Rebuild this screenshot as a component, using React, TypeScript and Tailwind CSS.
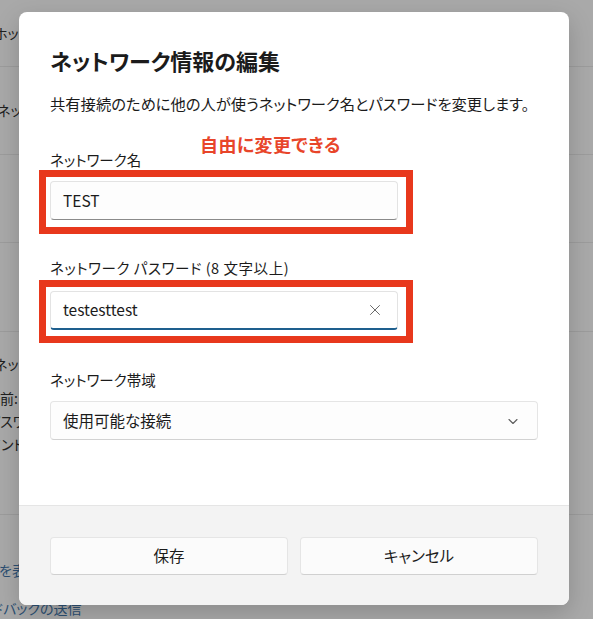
import React from "react";

const font = "font-['Noto_Sans_CJK_JP','Noto_Sans',sans-serif] [font-feature-settings:'palt']";

const Backdrop = () => {
  return (
    <div className="flex flex-col w-full h-full text-[14px] text-[#202020]">
      <div className="h-[67px] border-b border-[#9c9c9c] flex items-center -ml-[6px]">ホットスポット</div>
      <div className="h-[88px] border-b border-[#9c9c9c] flex items-center -ml-[3px]">ネットワーク</div>
      <div className="h-[88px] border-b border-[#9c9c9c]"></div>
      <div className="h-[89px] border-b border-[#9c9c9c]"></div>
      <div className="h-[183px] border-b border-[#9c9c9c] flex flex-col pt-[22px] gap-[3px]">
        <div className="-ml-[6px] leading-[20px]">ネットワーク</div>
        <div className="-ml-[14px] leading-[20px] mt-[11px]">名前: test</div>
        <div className="-ml-[13px] leading-[20px]">パスワード</div>
        <div className="-ml-[13px] leading-[20px]">バンド</div>
      </div>
      <div className="pt-[45px] flex flex-col gap-[18px] text-[#2c4f72]">
        <div className="-ml-[29px] leading-[20px]">詳細を表示</div>
        <div className="-ml-[44px] leading-[20px]">フィードバックの送信</div>
      </div>
    </div>
  );
};

const ChevronDown = () => (
  <svg width="12" height="12" viewBox="0 0 12 12" fill="none">
    <path d="M2 4.5 L6 8.5 L10 4.5" stroke="#5c5c5c" strokeWidth="1.1" strokeLinecap="round" strokeLinejoin="round" />
  </svg>
);

const ClearX = () => (
  <svg width="12" height="12" viewBox="0 0 12 12" fill="none">
    <path d="M1.5 1.5 L10.5 10.5 M10.5 1.5 L1.5 10.5" stroke="#6a6a6a" strokeWidth="1" strokeLinecap="round" />
  </svg>
);

const App = () => {
  return (
    <div className={`relative w-[593px] h-[619px] overflow-hidden bg-[#a9a9a9] ${font}`}>
      <Backdrop />

      <div className="absolute left-[19px] top-[12px] w-[550px] h-[593px] rounded-[8px] bg-white flex flex-col overflow-hidden shadow-[0_8px_24px_rgba(0,0,0,0.18)]">
        <div className="flex-1 px-[31px] pt-[33px] flex flex-col text-[#1b1b1b]">
          <h1 className="text-[22px] leading-[30px] font-semibold">ネットワーク情報の編集</h1>
          <p className="mt-[18px] text-[15.3px] leading-[20px]">
            共有接続のために他の人が使うネットワーク名とパスワードを変更します。
          </p>

          <span className="mt-[37px] text-[14.5px] leading-[20px]">ネットワーク名</span>
          <div className="relative mt-[11px] w-[348px]">
            <div className="h-[39px] rounded-[4px] border border-[#e3e3e3] border-b-[#8a8a8a] bg-[#fdfdfd] flex items-center px-[12px] text-[15.5px]">
              TEST
            </div>
            <div className="absolute -left-[11px] -top-[11px] -right-[15px] -bottom-[14px] border-[7px] border-[#e8381c]"></div>
            <div className="absolute left-[150px] -top-[49px] text-[18px] font-bold text-[#e8452a] leading-[24px] tracking-[0.4px]">
              自由に変更できる
            </div>
          </div>

          <span className="mt-[38px] text-[14.5px] leading-[20px] tracking-[0.55px]">ネットワーク パスワード (8 文字以上)</span>
          <div className="relative mt-[13px] w-[348px]">
            <div className="h-[39px] rounded-[4px] border border-[#e3e3e3] border-b-[2px] border-b-[#1e5f8e] bg-white flex items-center justify-between px-[12px] text-[15.5px]">
              <span>testesttest</span>
              <span className="mr-[4px] flex"><ClearX /></span>
            </div>
            <div className="absolute -left-[11px] -top-[11px] -right-[15px] -bottom-[13px] border-[7px] border-[#e8381c]"></div>
          </div>

          <span className="mt-[40px] text-[14.5px] leading-[20px]">ネットワーク帯域</span>
          <div className="mt-[11px] h-[39px] rounded-[4px] border border-[#e5e5e5] border-b-[#d2d2d2] bg-[#fdfdfd] flex items-center justify-between pl-[12px] pr-[18px] text-[15.5px]">
            <span>使用可能な接続</span>
            <ChevronDown />
          </div>
        </div>

        <div className="h-[100px] border-t border-[#e5e5e5] bg-[#f3f3f3] px-[31px] pt-[31px] flex gap-[12px] text-[15.5px] text-[#1b1b1b]">
          <button className="flex-1 h-[38px] rounded-[4px] border border-[#e5e5e5] border-b-[#d0d0d0] bg-[#fbfbfb] flex items-center justify-center">
            保存
          </button>
          <button className="flex-1 h-[38px] rounded-[4px] border border-[#e5e5e5] border-b-[#d0d0d0] bg-[#fbfbfb] flex items-center justify-center">
            キャンセル
          </button>
        </div>
      </div>
    </div>
  );
};

export default App;
